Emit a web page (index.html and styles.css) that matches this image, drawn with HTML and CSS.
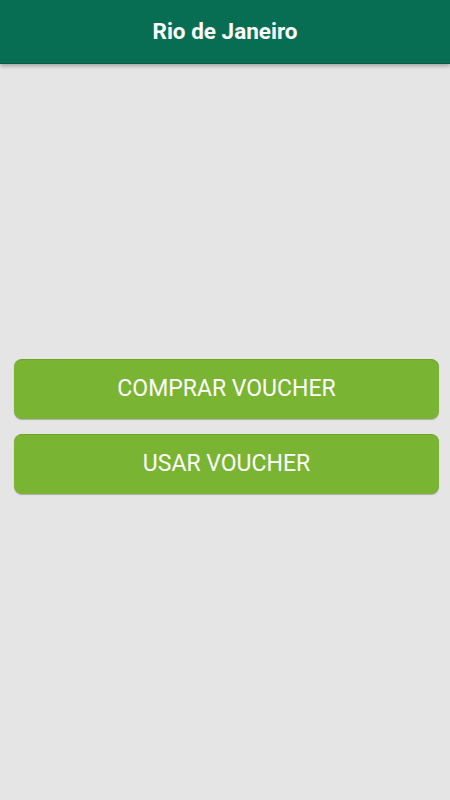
FILE: index.html
```html
<!DOCTYPE html>
<html>
<head>
	<meta charset="utf-8">
	<title>Rio de Janeiro</title>
	<link rel="stylesheet" href="styles.css">
</head>
<body>
	<div id="bar">Rio de Janeiro</div>
	<div id="main">
		<a href="#" class="btn">COMPRAR VOUCHER</a>
		<a href="#" class="btn">USAR VOUCHER</a>
	</div>
</body>
</html>
```
FILE: styles.css
```css
* {padding: 0; margin: 0; box-sizing: border-box;}
html, body {height: 100%;}
body {background: #e5e5e5; font-family: Roboto, "Liberation Sans", sans-serif; display: flex; flex-direction: column;}
#bar {height: 64px; background: #076e54; color: #fff; font-weight: bold; font-size: 22.5px; text-align: center; line-height: 62px; border-bottom: 1px solid #045a3c; box-shadow: 0 2px 4px rgba(0,0,0,0.3); position: relative; z-index: 1;}
#main {flex: 1; display: flex; flex-direction: column; justify-content: center; gap: 15px; padding: 0 11px 11px 14px;}
.btn {display: block; height: 60px; line-height: 57px; background: #79b433; color: #fff; text-decoration: none; text-align: center; font-size: 23px; border-radius: 8px; border-top: 1px solid #6aa822; box-shadow: 0 1px 1px rgba(0,0,0,0.25);}
```
